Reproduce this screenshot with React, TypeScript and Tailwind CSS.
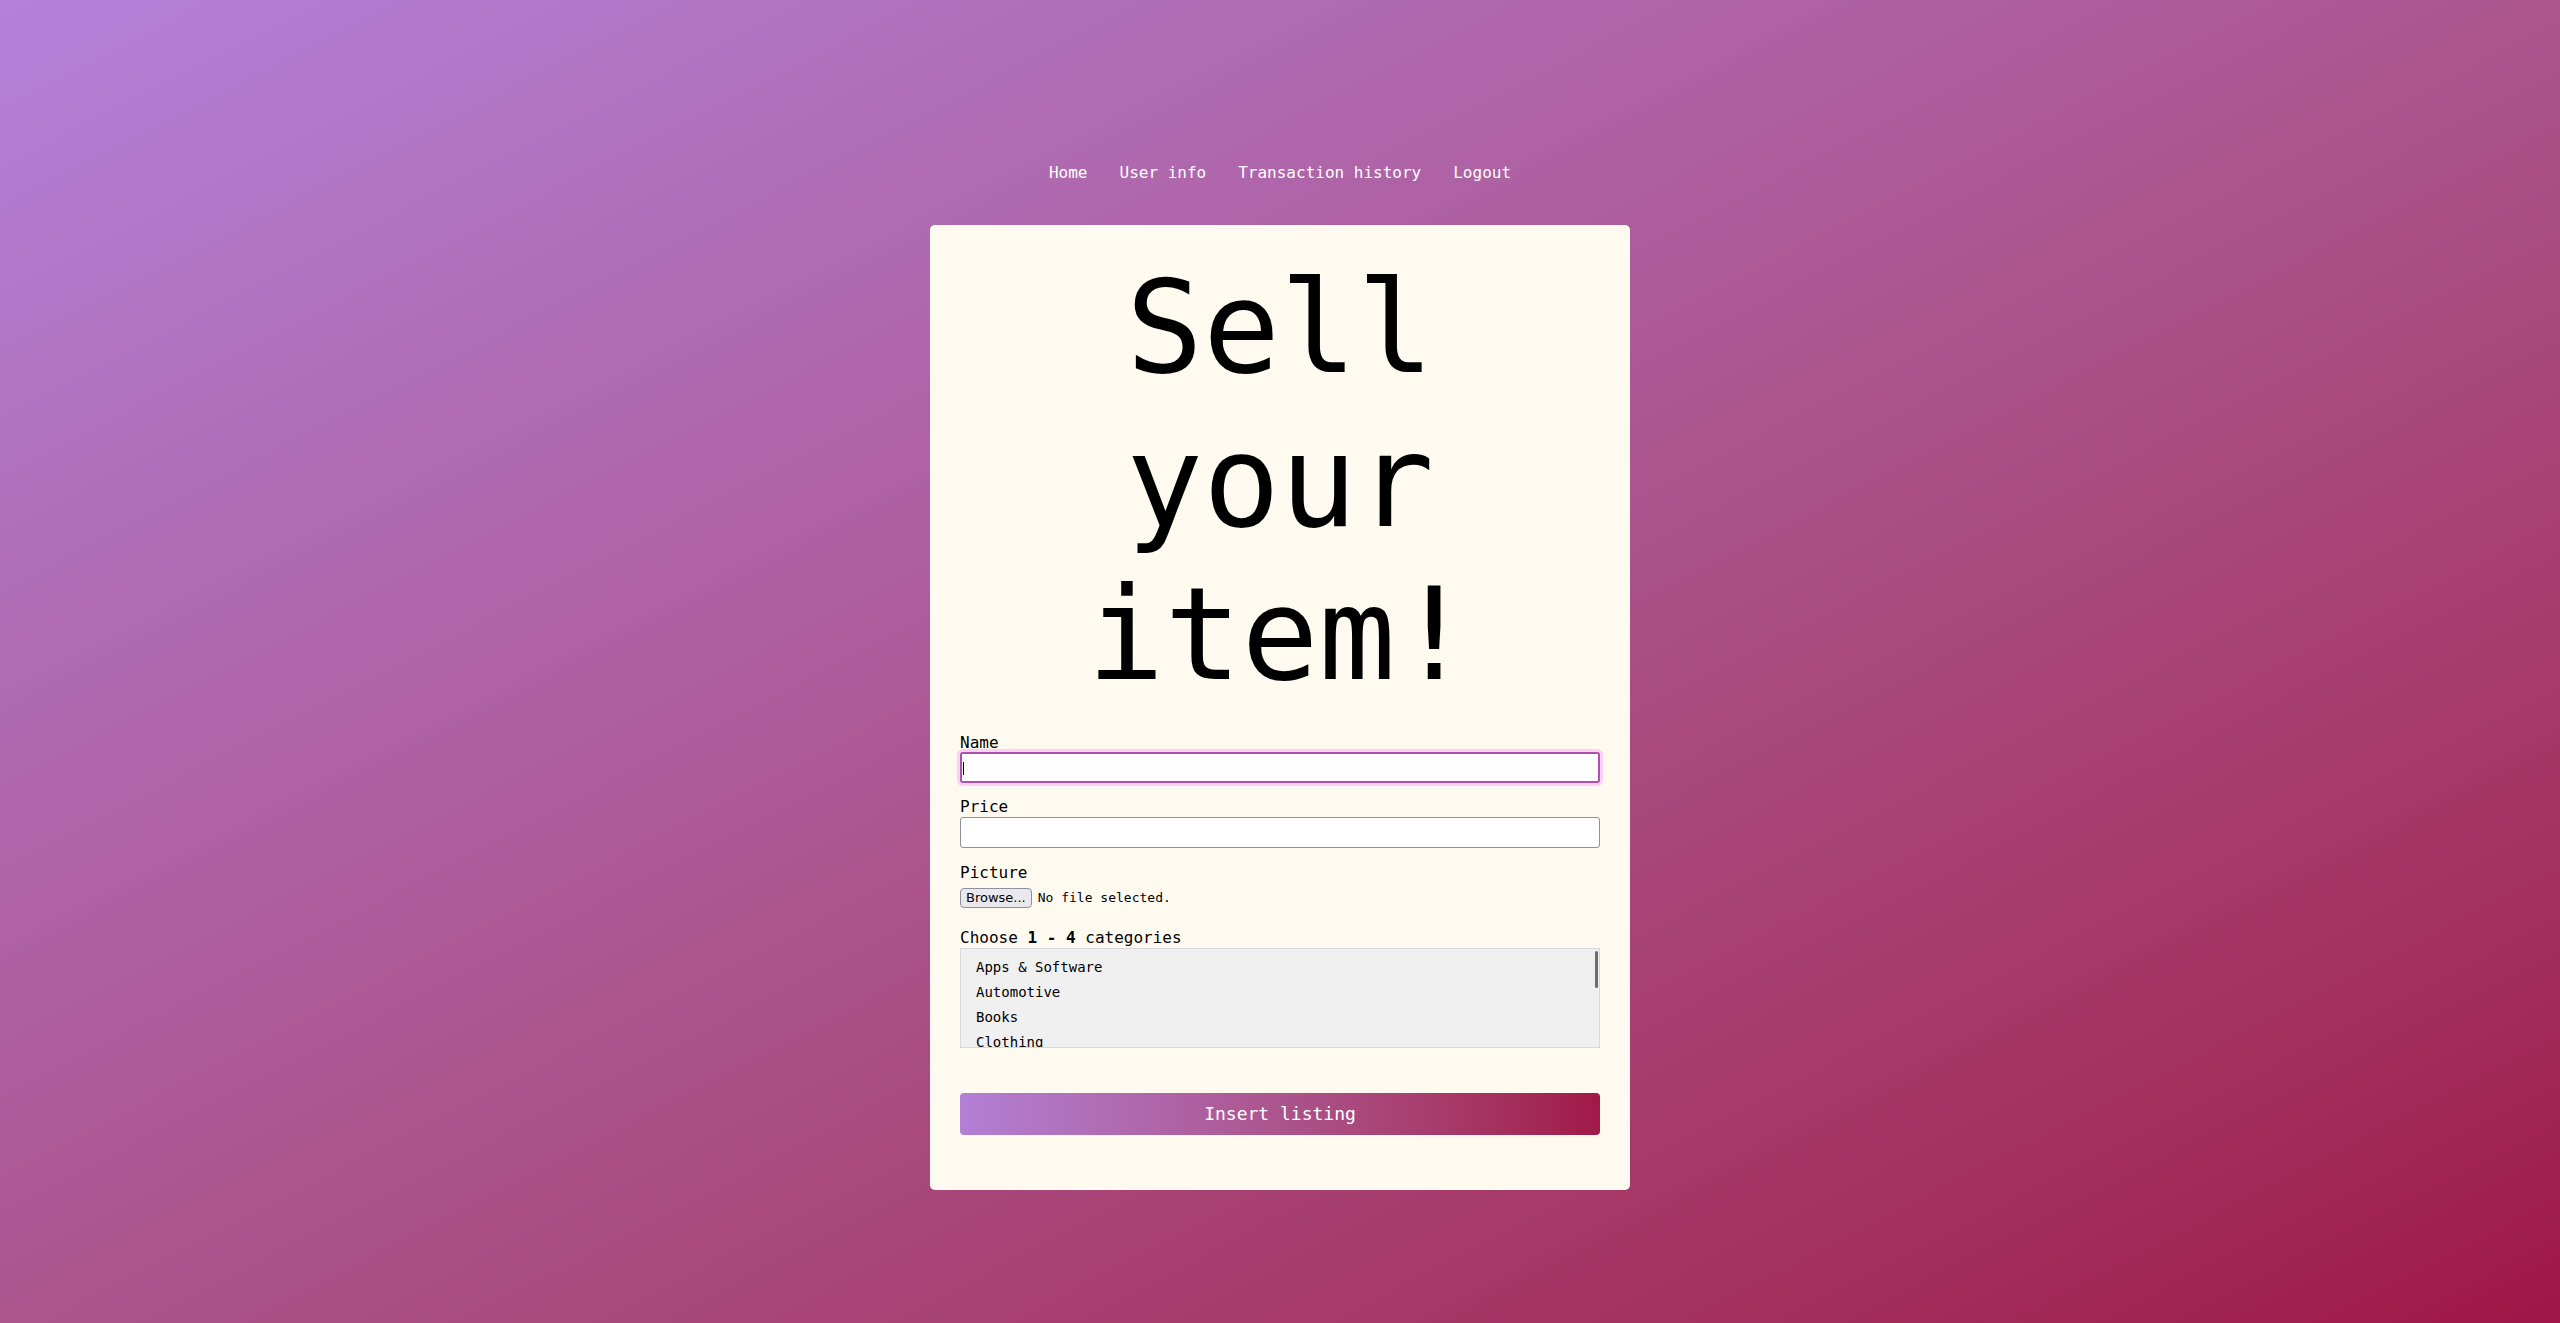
import React from "react";

const categories = ["Apps & Software", "Automotive", "Books", "Clothing"];

export default function App() {
  return (
    <div className="min-h-screen w-full bg-linear-to-br from-[#b381da] to-[#9e1546] flex flex-col items-center font-['DejaVu_Sans_Mono',monospace] text-black">
      <nav className="pt-[163px] flex gap-[32px] text-white text-[16px] leading-[19px]">
        <a href="#" className="text-white">Home</a>
        <a href="#" className="text-white">User info</a>
        <a href="#" className="text-white">Transaction history</a>
        <a href="#" className="text-white">Logout</a>
      </nav>

      <div className="mt-[43px] w-[700px] bg-[#fffaf0] rounded-[5px] px-[30px] pt-[26px] pb-[55px]">
        <h1 className="text-[128px] leading-[1.2] text-center font-normal">
          Sell your item!
        </h1>

        <div className="mt-[21px]">
          <label className="block text-[16px] leading-[19px]">Name</label>
          <div className="relative">
            <input
              type="text"
              className="block w-full h-[31px] bg-white border-2 border-[#b24fb3] rounded-[3px] outline-none shadow-[0_0_0_3px_#f8d2ee] px-[2px] text-[13px]"
            />
            <div className="absolute left-[3px] top-[10px] w-[1px] h-[13px] bg-black" />
          </div>
        </div>

        <div className="mt-[14px]">
          <label className="block text-[16px] leading-[19px]">Price</label>
          <input
            type="text"
            className="block mt-[1px] w-full h-[31px] bg-white border border-[#8f8f9d] rounded-[3px] outline-none px-[2px] text-[13px]"
          />
        </div>

        <div className="mt-[15px]">
          <label className="block text-[16px] leading-[19px]">Picture</label>
          <div className="mt-[6px] flex items-center h-[20px]">
            <button className="h-[20px] px-[5px] bg-[#e9e9ed] border border-[#8f8f9d] rounded-[4px] text-[13px] leading-[16px] font-['DejaVu_Sans',sans-serif] text-black">
              Browse...
            </button>
            <span className="ml-[6px] text-[13px] leading-[16px]">No file selected.</span>
          </div>
        </div>

        <div className="mt-[20px]">
          <label className="block text-[16px] leading-[19px]">
            Choose <b className="font-bold">1 - 4</b> categories
          </label>
          <div className="relative mt-[1px] h-[100px] bg-[#f0f0f0] border border-[#d8d8d8] overflow-hidden">
            <div className="pt-[6px] pl-[15px] text-[14px] leading-[25px]">
              {categories.map((c) => (
                <div key={c}>{c}</div>
              ))}
            </div>
            <div className="absolute right-[1px] top-[2px] w-[3px] h-[37px] bg-[#6d6d6d] rounded-[2px]" />
          </div>
        </div>

        <button className="mt-[45px] w-full h-[42px] rounded-[4px] bg-linear-to-r from-[#b27fd5] to-[#a01848] text-white text-[18px] leading-[21px]">
          Insert listing
        </button>
      </div>
    </div>
  );
}
